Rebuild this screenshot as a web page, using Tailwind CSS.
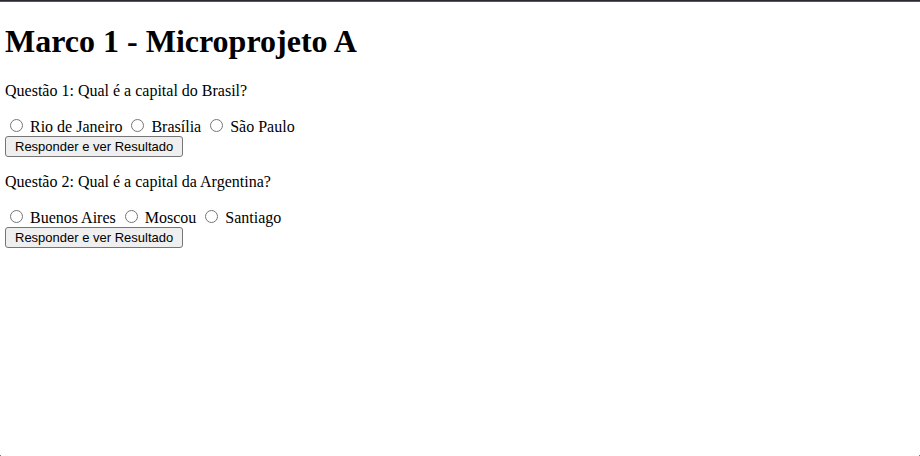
<!DOCTYPE html>
<html lang="pt-BR">
<head>
<meta charset="utf-8">
<title>Marco 1 - Microprojeto A</title>
<script src="https://cdn.jsdelivr.net/npm/@tailwindcss/browser@4"></script>
</head>
<body class="relative min-h-screen bg-white font-['Liberation_Serif',serif] text-base leading-[18px] text-black">
<div class="h-[2px] border-b border-[#58545b] bg-[#2d2930]"></div>
<main class="flex flex-col gap-4 px-[5px] pt-[21px]">
<h1 class="mb-[7px] text-[32px] leading-9 font-bold">Marco 1 - Microprojeto A</h1>
<form>
<fieldset>
<legend class="mb-[18px]">Questão 1: Qual é a capital do Brasil?</legend>
<div class="flex gap-[9px] pl-[5px]">
<label class="flex items-start gap-[7px]"><input type="radio" name="q1" class="mt-px size-[13px] appearance-none rounded-full border border-[#767676] bg-white checked:border-4 checked:border-[#0075ff]">Rio de Janeiro</label>
<label class="flex items-start gap-[7px]"><input type="radio" name="q1" class="mt-px size-[13px] appearance-none rounded-full border border-[#767676] bg-white checked:border-4 checked:border-[#0075ff]">Brasília</label>
<label class="flex items-start gap-[7px]"><input type="radio" name="q1" class="mt-px size-[13px] appearance-none rounded-full border border-[#767676] bg-white checked:border-4 checked:border-[#0075ff]">São Paulo</label>
</div>
</fieldset>
<button type="button" class="block rounded-[3px] border border-[#767676] bg-[#efefef] px-[9px] font-['Liberation_Sans',sans-serif] text-[13px] leading-[19px]">Responder e ver Resultado</button>
</form>
<form>
<fieldset>
<legend class="mb-[18px]">Questão 2: Qual é a capital da Argentina?</legend>
<div class="flex gap-[9px] pl-[5px]">
<label class="flex items-start gap-[7px]"><input type="radio" name="q2" class="mt-px size-[13px] appearance-none rounded-full border border-[#767676] bg-white checked:border-4 checked:border-[#0075ff]">Buenos Aires</label>
<label class="flex items-start gap-[7px]"><input type="radio" name="q2" class="mt-px size-[13px] appearance-none rounded-full border border-[#767676] bg-white checked:border-4 checked:border-[#0075ff]">Moscou</label>
<label class="flex items-start gap-[7px]"><input type="radio" name="q2" class="mt-px size-[13px] appearance-none rounded-full border border-[#767676] bg-white checked:border-4 checked:border-[#0075ff]">Santiago</label>
</div>
</fieldset>
<button type="button" class="block rounded-[3px] border border-[#767676] bg-[#efefef] px-[9px] font-['Liberation_Sans',sans-serif] text-[13px] leading-[19px]">Responder e ver Resultado</button>
</form>
</main>
<div class="absolute bottom-0 left-0 size-px bg-[#777777]"></div>
<div class="absolute right-0 bottom-0 size-px bg-[#777777]"></div>
</body>
</html>
